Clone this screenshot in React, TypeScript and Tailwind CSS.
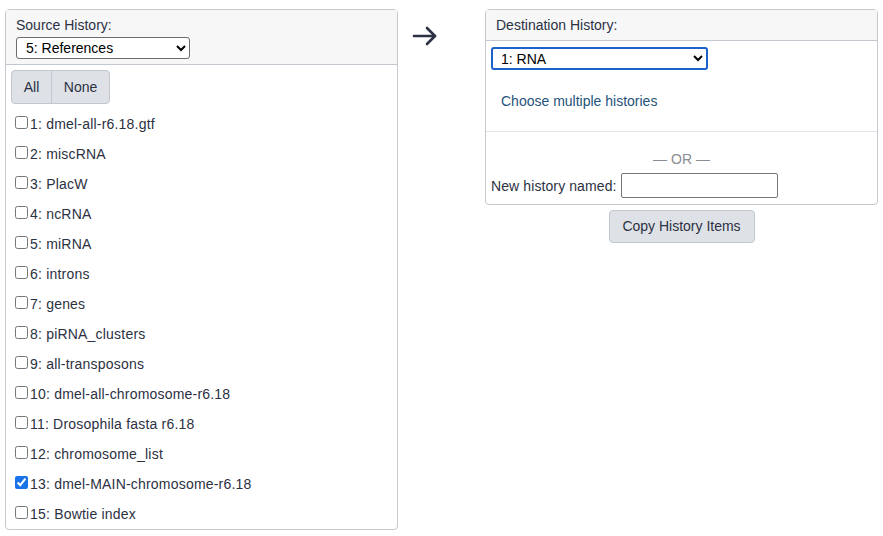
import React, { useState } from 'react';

const items = [
  '1: dmel-all-r6.18.gtf',
  '2: miscRNA',
  '3: PlacW',
  '4: ncRNA',
  '5: miRNA',
  '6: introns',
  '7: genes',
  '8: piRNA_clusters',
  '9: all-transposons',
  '10: dmel-all-chromosome-r6.18',
  '11: Drosophila fasta r6.18',
  '12: chromosome_list',
  '13: dmel-MAIN-chromosome-r6.18',
  '15: Bowtie index',
];

export default function App() {
  const [checked, setChecked] = useState<Record<string, boolean>>({ '13: dmel-MAIN-chromosome-r6.18': true });

  return (
    <div className="flex items-start pt-[9px] pl-[5px] text-[14px] text-[#2c3143] bg-white" style={{ fontFamily: '"Liberation Sans", Arial, sans-serif' }}>
      {/* source */}
      <div className="w-[393px] rounded border border-[#c4c9d0]">
        <div className="h-[55px] border-b border-[#c4c9d0] bg-[#f7f7f8] px-[10px] pt-[6px]">
          <div className="leading-[18px]">Source History:</div>
          <select className="mt-[3px] h-[22px] w-[174px] rounded-[3px] border border-[#6e6e6e] bg-white px-[5px] text-[14px] text-black">
            <option>5: References</option>
          </select>
        </div>
        <div className="px-[5px] pt-[5px]">
          <div className="inline-flex rounded-[4px] border border-[#c0c7cf] bg-[#dee2e6]">
            <button className="h-[32px] w-[40px] border-r border-[#c0c7cf] text-[14px]">All</button>
            <button className="h-[32px] w-[57px] text-[14px]">None</button>
          </div>
          <div className="mt-[5px]">
            {items.map((it) => (
              <label key={it} className="flex h-[30px] items-center pl-[4px]">
                <input
                  type="checkbox"
                  checked={!!checked[it]}
                  onChange={() => setChecked((c) => ({ ...c, [it]: !c[it] }))}
                  className="m-0 mb-[4px] h-[13px] w-[13px] accent-[#1a73e8]"
                />
                <span className="ml-[2px] leading-[18px] tracking-[0.2px]">{it}</span>
              </label>
            ))}
          </div>
        </div>
      </div>

      {/* arrow */}
      <div className="w-[87px] pl-[14px] pt-[17px]">
        <svg width="26" height="20" viewBox="0 0 26 20" fill="none" stroke="#2c3143" strokeWidth="2.6" strokeLinecap="round" strokeLinejoin="round">
          <path d="M2 10h21" />
          <path d="M15 2l8 8-8 8" />
        </svg>
      </div>

      {/* destination */}
      <div className="flex w-[393px] flex-col items-center">
        <div className="w-full rounded border border-[#c4c9d0]">
          <div className="h-[31px] border-b border-[#c4c9d0] bg-[#f7f7f8] px-[10px] pt-[6px] leading-[18px]">Destination History:</div>
          <div className="px-[5px] pt-[6px]">
            <select className="h-[23px] w-[217px] rounded-[3px] border-2 border-[#1b61c9] bg-white px-[4px] text-[14px] text-black outline-none">
              <option>1: RNA</option>
            </select>
            <div className="pl-[10px] pt-[21px] pb-[19px]">
              <a href="#" className="leading-[18px] text-[#25537b]">Choose multiple histories</a>
            </div>
          </div>
          <div className="border-t border-[#e3e5e8] px-[5px] pt-[18px] pb-[6px]">
            <div className="text-center leading-[18px] text-[#8a8d93]">— OR —</div>
            <div className="mt-[5px] flex items-center">
              <span className="leading-[18px] tracking-[0.1px]">New history named:</span>
              <input type="text" className="ml-[4px] h-[25px] w-[157px] rounded-[2px] border border-[#767676] bg-white" />
            </div>
          </div>
        </div>
        <button className="mt-[5px] h-[33px] w-[146px] rounded-[4px] border border-[#c0c7cf] bg-[#dee2e6] text-[14px]">Copy History Items</button>
      </div>
    </div>
  );
}
